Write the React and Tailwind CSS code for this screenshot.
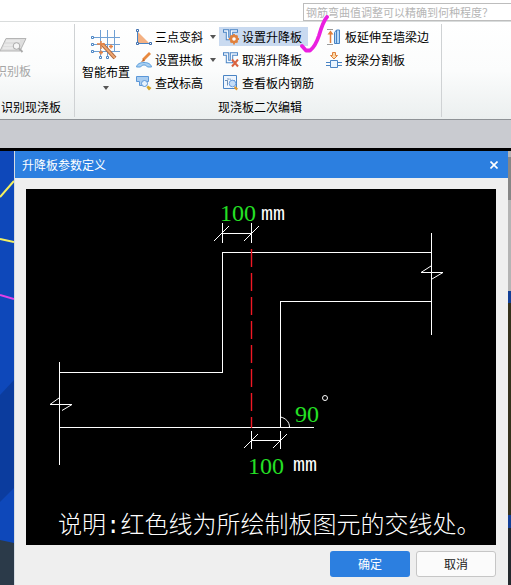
import React from "react";

const BLUE = "#4a84c4";
const ORANGE = "#e0803c";

function Caret() {
  return (
    <svg viewBox="0 0 6 4" className="h-1 w-1.5 shrink-0" aria-hidden="true">
      <path d="M0 0h6L3 4z" fill="#555" />
    </svg>
  );
}

function Icon({ children }) {
  return (
    <svg viewBox="0 0 16 16" className="h-4 w-4 shrink-0" fill="none" aria-hidden="true">
      {children}
    </svg>
  );
}

function SlopeIcon() {
  return (
    <Icon>
      <path d="M2 3l11 11H2z" fill="#f4b183" />
      <path d="M1.5 2v12M2 14.5h12" stroke={BLUE} />
      <g fill="#fff" stroke="#3f6fae">
        <path d="M.5.5h2v2h-2zM.5 13.5h2v2h-2zM13.5 13.5h2v2h-2z" />
      </g>
    </Icon>
  );
}

function ArchIcon() {
  return (
    <Icon>
      <path d="M14 1L7 8" stroke="#e8893f" strokeWidth="2.8" />
      <path d="M7.500 7L5 10l4-1z" fill="#b9602a" />
      <path d="M.5 15c.5-3 3.500-4.500 7.500-4.500s7 1.500 7.500 4.500h-4c-1-1.500-2-2-3.500-2s-2.500.5-3.500 2z" fill="#a9d0f2" stroke="#5f9fdc" />
    </Icon>
  );
}

function ElevationIcon() {
  return (
    <Icon>
      <path d="M.5 1.500h12v5h-2v4h-7v-4h-3z" fill="#a9cdf0" stroke="#5b97d8" />
      <circle cx="8.500" cy="8.500" r="3" fill="#e6f2fc" stroke="#5b97d8" />
      <path d="M12 10.500l3.500 2.500-2.500 2.500-2.500-3z" fill="#d5a62c" />
    </Icon>
  );
}

function StepPath() {
  return (
    <>
      <path d="M0 2h4.500v7.500h4V2H15" stroke={BLUE} strokeWidth="3.400" />
      <path d="M1 2h3.500v7.500h4V2H14" stroke="#f2f8ff" strokeWidth="1.400" />
    </>
  );
}

function SetLevelIcon() {
  return (
    <Icon>
      <StepPath />
      <g stroke={ORANGE}>
        <circle cx="11" cy="10" r="3" strokeWidth="2.400" fill="#fff" />
        <path d="M11 5v1.500M11 13.500V15.500M5.800 10h1.500M14.700 10h1.300M7.500 6.500l1 1M14.500 6.500l-1 1M7.500 13.500l1-1M14.500 13.500l-1-1" strokeWidth="1.800" />
      </g>
    </Icon>
  );
}

function CancelLevelIcon() {
  return (
    <Icon>
      <StepPath />
      <path d="M9 7.500l6 7M15 7.500l-6 7" stroke="#d9623f" strokeWidth="2" />
    </Icon>
  );
}

function ViewRebarIcon() {
  return (
    <Icon>
      <path d="M.5.5h13v13H.5z" fill="#eef5fd" stroke={BLUE} />
      <path d="M2 5.500h2.500a1.500 1.500 0 0 0 0-2.500M4.500 5.500v5M7 3.500c0 2 1 2 3 2h2" stroke="#6c8fb5" />
      <circle cx="9.500" cy="8.500" r="3.300" fill="#c4ddf7" stroke="#6b9fe0" />
      <path d="M12 11l3 2.500-1.500 2L11 13z" fill="#e09a30" />
    </Icon>
  );
}

function ExtendIcon() {
  return (
    <Icon>
      <path d="M1 .5h6M1 15.500h6" stroke="#999" />
      <path d="M4.500 14V4" stroke={ORANGE} strokeWidth="1.500" />
      <path d="M4.500 1.500L1.500 5.500h6z" fill={ORANGE} />
      <path d="M8.500 3.500l2-2.500h3v13.500h-5z" fill="#b5d8f7" stroke={BLUE} />
      <path d="M10.500 1v13" stroke={BLUE} />
    </Icon>
  );
}

function SplitIcon() {
  return (
    <Icon>
      <path d="M6.500.5h3v3h2L8 7 4.500 3.500h2z" fill="#fbd9a8" stroke={ORANGE} />
      <path d="M0 10.500h4M12 10.500h4M0 13.500h4M12 13.500h4" stroke={BLUE} />
      <path d="M4.500 8.500h7v7h-7z" fill="#eaf4fe" stroke={BLUE} />
    </Icon>
  );
}

function SmartLayoutIcon() {
  return (
    <svg viewBox="0 0 30 30" className="h-[30px] w-[30px]" fill="none" aria-hidden="true">
      <path d="M9.500 0v26M16.500 0v26M23.500 0v22M3 7.500h26M3 14.500h26M3 21.500h26" stroke="#6fa0d4" />
      <g fill="#fff" stroke={BLUE}>
        <path d="M.5 6.500h2v2h-2zM.5 13.500h2v2h-2zM.5 20.500h2v2h-2zM8.500 26.500h2v2h-2zM15.500 26.500h2v2h-2z" />
      </g>
      <path d="M11 14l13 14" stroke="#a9623c" strokeWidth="4" />
      <path d="M11 14l13 14" stroke="#eda66f" strokeWidth="2" />
      <path d="M10 11v8M6 14h8M18 16.500h4M20 14.500v4M8 22.500h4M10 20.500v4" stroke="#e58344" strokeWidth="1.500" />
    </svg>
  );
}

function RecognizeIcon() {
  return (
    <svg viewBox="0 0 28 16" className="h-4 w-7" fill="none" aria-hidden="true">
      <path d="M7 1.500h20L21 14H1z" fill="#dedede" stroke="#b4b4b4" />
      <path d="M7 4h14M5 8h10M4 11h10" stroke="#f3f3f3" />
      <circle cx="17.500" cy="9" r="3.300" fill="#f6f6f6" stroke="#ababab" />
      <path d="M20 11.500l3.500 3.500" stroke="#aaa" strokeWidth="2" />
    </svg>
  );
}

function Tool({ icon, label, active, menu, padded }) {
  return (
    <button
      type="button"
      className={`flex h-[19px] items-center gap-[3px] whitespace-nowrap ${padded ? "pl-1 pr-1.5" : ""} ${active ? "bg-[#c9daf0]" : ""}`}
    >
      {icon}
      <span>{label}</span>
      {menu && (
        <span className="pl-1">
          <Caret />
        </span>
      )}
    </button>
  );
}

function Ribbon() {
  return (
    <section className="flex h-[99px] border-t border-b border-t-[#d9dcdc] border-b-[#8e9296] bg-linear-to-b from-white via-[#fbfcfc] to-[#ebefef] py-0.5">
      <div className="flex w-[75px] flex-col justify-between overflow-hidden border-r border-[#cfd2d4] pt-[3px]">
        <button type="button" className="-ml-1.5 flex w-[38px] flex-col items-center gap-2.5 whitespace-nowrap pt-2.5 text-[#a6a6a6]">
          <RecognizeIcon />
          <span className="leading-4">识别板</span>
        </button>
        <h2 className="h-5 pl-px leading-5">识别现浇板</h2>
      </div>
      <div className="flex w-[367px] shrink-0 flex-col justify-between border-r border-[#cfd2d4] pt-[3px]">
        <div className="flex items-start pl-1.5">
          <button type="button" className="mr-[5px] flex w-[50px] flex-col items-center pt-[3px]">
            <SmartLayoutIcon />
            <span className="mt-1 leading-4">智能布置</span>
            <span className="pt-1.5">
              <Caret />
            </span>
          </button>
          <div className="flex w-[83px] flex-col items-start gap-1">
            <Tool icon={<SlopeIcon />} label="三点变斜" menu />
            <Tool icon={<ArchIcon />} label="设置拱板" menu />
            <Tool icon={<ElevationIcon />} label="查改标高" />
          </div>
          <div className="relative mr-1.5 flex flex-col items-start gap-1">
            <Tool icon={<SetLevelIcon />} label="设置升降板" active padded />
            <Tool icon={<CancelLevelIcon />} label="取消升降板" padded />
            <Tool icon={<ViewRebarIcon />} label="查看板内钢筋" padded />
            <svg viewBox="0 0 32 38" className="pointer-events-none absolute -top-3 left-20 h-[38px] w-8" fill="none" aria-hidden="true">
              <path d="M3 31l4 4.500h4c4-3 7-9 9-15 2-7 4-14 8-18.500" stroke="#ea1fe0" strokeWidth="3.800" strokeLinecap="round" strokeLinejoin="round" />
            </svg>
          </div>
          <div className="flex flex-col items-start gap-1">
            <Tool icon={<ExtendIcon />} label="板延伸至墙梁边" />
            <Tool icon={<SplitIcon />} label="按梁分割板" />
          </div>
        </div>
        <h2 className="h-5 pl-1 text-center leading-5">现浇板二次编辑</h2>
      </div>
    </section>
  );
}

function SlabDiagram() {
  return (
    <svg viewBox="0 0 470 356" className="block w-full bg-black" fill="none" role="img" aria-label="升降板参数">
      <g stroke="#fff" shapeRendering="crispEdges">
        <path d="M33.500 183.500h163v-120h209M33.500 238.500h254M254.500 238.500v-126h151" />
        <path d="M33.500 173v103M405.500 44v102" />
        <path d="M196.500 34v20M225.500 34v20M196.500 44.500h29M225.500 242v18M254.500 242v18M225.500 251.500h29" />
      </g>
      <g stroke="#fff">
        <path d="M33 209l-9 6.500h22l-10 6M405 77l-10 6.500h22l-11 6.500" />
        <path d="M188 52l15-15M218 52l15-15M218 259l14-14M247 259l14-14" />
        <path d="M254.500 228c5 1 9 5 9 10" />
      </g>
      <path d="M225.500 60v179" stroke="#f01824" strokeWidth="1.400" strokeDasharray="18 6" />
      <circle cx="299" cy="209" r="2.500" stroke="#fff" />
      <g fill="#25e025" fontSize="24" className="font-['Liberation_Serif',serif]">
        <text x="194" y="32">100</text>
        <text x="222" y="285">100</text>
        <text x="269" y="233">90</text>
      </g>
      <g fill="#fff" fontSize="20" className="font-['Liberation_Mono',monospace]">
        <text x="235" y="31">mm</text>
        <text x="267" y="282">mm</text>
      </g>
      <text x="32" y="344" fill="#fff" fontSize="24" className="font-['Liberation_Mono','Noto_Sans_CJK_SC',sans-serif] font-light">
        说明:红色线为所绘制板图元的交线处。
      </text>
    </svg>
  );
}

function Dialog() {
  return (
    <section role="dialog" aria-labelledby="dialog-title" className="min-w-0 flex-1 border-l border-[#d5dbe2] bg-[#efefef]">
      <header className="flex h-[27px] items-center justify-between bg-[#2c7fe0] pr-2.5 pl-[7px] text-white">
        <h1 id="dialog-title">升降板参数定义</h1>
        <button type="button" aria-label="关闭">
          <svg viewBox="0 0 8 8" className="h-2 w-2" aria-hidden="true">
            <path d="M.5.5l7 7M7.500.5l-7 7" stroke="#fff" strokeWidth="1.600" />
          </svg>
        </button>
      </header>
      <div className="pt-[11px] pr-3 pb-2 pl-[11px]">
        <SlabDiagram />
        <div className="mt-1.5 flex justify-end gap-1.5">
          <button type="button" className="h-[26px] w-20 rounded-[3px] bg-[#2c7fe0] text-white">
            确定
          </button>
          <button type="button" className="h-[26px] w-20 rounded-[3px] border border-[#c6c6c6] bg-[#fbfbfb] text-[#222]">
            取消
          </button>
        </div>
      </div>
    </section>
  );
}

export default function App() {
  return (
    <div className="flex min-h-screen flex-col overflow-hidden bg-white font-['Noto_Sans_CJK_SC',sans-serif] text-xs text-black">
      <div className="flex h-[21px] justify-end pt-[3px]">
        <input
          type="text"
          aria-label="搜索"
          placeholder="钢筋弯曲值调整可以精确到何种程度？"
          className="h-[18px] w-[208px] border border-r-0 border-[#bdbdbd] bg-white pl-0.5 text-[11px] placeholder:text-[#b5b5b5]"
        />
      </div>
      <Ribbon />
      <div className="h-[28px] bg-[#c9cbd0]" />
      <main className="flex flex-1 border-t-[3px] border-black">
        <svg viewBox="0 0 14 434" preserveAspectRatio="xMinYMin slice" className="h-[434px] w-3.5 shrink-0" aria-hidden="true">
          <path d="M0 0h14v434H0z" fill="#0e48ba" />
          <path d="M0 244l14-15v108L0 351z" fill="#0b3c9e" />
          <path d="M0 389l14 3v42H0z" fill="#2b3a49" />
          <path d="M0 46l14-16M0 88l14 3" stroke="#f4f060" strokeWidth="2" />
          <path d="M0 144l14 4" stroke="#e040e8" strokeWidth="2" />
        </svg>
        <Dialog />
        <svg viewBox="0 0 3 434" className="h-[434px] w-[3px] shrink-0" aria-hidden="true">
          <path d="M0 0h3v434H0z" fill="#23282d" />
          <path d="M0 0h3v140H0z" fill="#b4b4b4" />
          <path d="M0 6h3v43H0z" fill="#868686" />
          <path d="M0 140h3v12H0zM0 364h3v13H0z" fill="#123f96" />
          <path d="M0 152h3v212H0z" fill="#35321c" />
        </svg>
      </main>
    </div>
  );
}
